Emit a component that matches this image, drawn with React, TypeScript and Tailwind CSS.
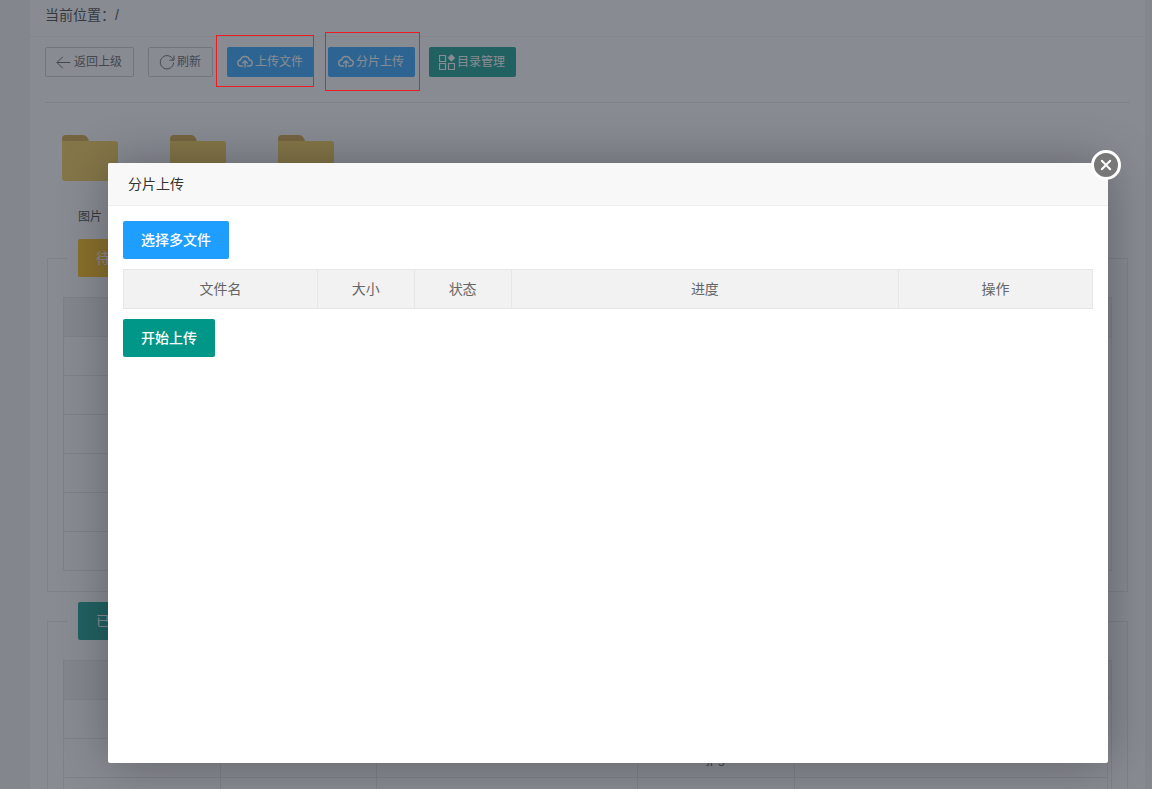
import React from 'react';

type IconProps = {
    children: React.ReactNode;
};

type FileRow = {
    cells: string[];
};

type FileSectionProps = {
    title: string;
    titleClass: string;
    rows: FileRow[];
};

const Icon: React.FC<IconProps> = ({children}) => (
    <svg
        className="size-4 shrink-0"
        viewBox="0 0 16 16"
        fill="none"
        stroke="currentColor"
        strokeWidth="1"
        strokeLinecap="round"
        strokeLinejoin="round"
        aria-hidden="true"
    >
        {children}
    </svg>
);

const BackIcon = () => (
    <Icon>
        <path d="M14 8.5H1M6.500 3L1 8.500l5.500 5.500"/>
    </Icon>
);

const RefreshIcon = () => (
    <Icon>
        <path d="M14.2 5.6A6.7 6.7 0 1 0 14.7 9"/>
        <path d="M15 2v4.200h-4.200"/>
    </Icon>
);

const UploadIcon = () => (
    <Icon>
        <path d="M5.600 12H4a3 3 0 0 1-.4-6A4.500 4.500 0 0 1 12.400 6 3 3 0 0 1 12 12h-1.600" strokeWidth="1.4"/>
        <path d="M8 13V7M5.700 9L8 6.800 10.300 9" strokeWidth="1.4"/>
    </Icon>
);

const GridIcon = () => (
    <Icon>
        <path d="M.5 1.500h6v6h-6zM.5 9.500h6v6h-6zM9.500 9.500h6v6h-6z" strokeWidth="1.2"/>
        <path d="M12.500 .8L15.700 4 12.500 7.200 9.300 4z" fill="currentColor"/>
    </Icon>
);

const FolderIcon = () => (
    <svg className="h-[46px] w-14" viewBox="0 0 56 46" aria-hidden="true">
        <path d="M0 10V4a4 4 0 0 1 4-4h17c3 0 5 3 6 6v4z" fill="#d09e32"/>
        <path d="M0 6h53a3 3 0 0 1 3 3v34a3 3 0 0 1-3 3H3a3 3 0 0 1-3-3z" fill="#f5cb46"/>
    </svg>
);

const smallButton = 'flex h-[30px] items-center gap-0.5 rounded-xs pr-[11px] pl-[10px] text-xs whitespace-nowrap';
const bigButton = 'h-[38px] rounded-xs px-[18px] text-sm whitespace-nowrap text-white';

const folders = ['图片', '', ''];

const emptyRow: FileRow = {cells: ['', '', '', '', '']};
const waitingRows: FileRow[] = Array(6).fill(emptyRow);
const uploadedRows: FileRow[] = [
    emptyRow,
    {cells: ['', '', '', 'jpg', '']},
    emptyRow,
    emptyRow,
];

const FileSection: React.FC<FileSectionProps> = ({title, titleClass, rows}) => (
    <fieldset className="mx-0.5 border border-[#e6e6e6] px-[15px] pb-5">
        <legend className="ml-[5px] px-[10px]">
            <button type="button" className={`${bigButton} ${titleClass}`}>{title}</button>
        </legend>
        <div className="mt-5 border border-[#e6e6e6]">
            <div className="h-[39px] border-b border-[#e6e6e6] bg-[#f2f2f2]"/>
            <div className="pr-[3px]">
                <table className="w-full table-fixed border-separate border-spacing-0 text-center text-sm text-[#666]">
                    <colgroup>
                        <col className="w-[15%]"/>
                        <col className="w-[15%]"/>
                        <col className="w-[25%]"/>
                        <col className="w-[15%]"/>
                        <col className="w-[30%]"/>
                    </colgroup>
                    <tbody>
                        {rows.map((row, index) => (
                            <tr key={index} className="group">
                                {row.cells.map((cell, i) => (
                                    <td
                                        key={i}
                                        className="h-[39px] border-r border-b border-[#e6e6e6] p-0 group-last:h-[38px] group-last:border-b-0"
                                    >
                                        {cell}
                                    </td>
                                ))}
                            </tr>
                        ))}
                    </tbody>
                </table>
            </div>
        </div>
    </fieldset>
);

const FilesPage = () => (
    <div className="ml-[30px] mr-[7px] min-h-full bg-white">
        <div className="flex h-[37px] items-start border-b border-[#f6f6f6] px-[15px] pt-[5px] text-sm text-[#333]">
            当前位置：/
        </div>
        <div className="px-[15px] pt-[10px]">
            <div className="flex gap-[14px] border-b border-[#e6e6e6] pb-[25px]">
                <button type="button" className={`${smallButton} border border-[#c9c9c9] text-[#555]`}>
                    <BackIcon/>返回上级
                </button>
                <button type="button" className={`${smallButton} border border-[#c9c9c9] text-[#555]`}>
                    <RefreshIcon/>刷新
                </button>
                <button type="button" className={`${smallButton} bg-[#1e9fff] text-white`}>
                    <UploadIcon/>上传文件
                </button>
                <button type="button" className={`${smallButton} bg-[#1e9fff] text-white`}>
                    <UploadIcon/>分片上传
                </button>
                <button type="button" className={`${smallButton} bg-[#009688] text-white`}>
                    <GridIcon/>目录管理
                </button>
            </div>
            <ul className="mt-8 flex h-[104px] gap-[18px]">
                {folders.map((name, index) => (
                    <li key={index} className="flex w-[90px] flex-col items-center gap-[26px] text-xs leading-5 text-[#333]">
                        <FolderIcon/>
                        {name}
                    </li>
                ))}
            </ul>
            <div className="flex flex-col gap-[10px]">
                <FileSection title="待上传" titleClass="bg-[#ffb800]" rows={waitingRows}/>
                <FileSection title="已上传" titleClass="bg-[#009688]" rows={uploadedRows}/>
            </div>
        </div>
    </div>
);

const UploadDialog = () => (
    <div
        role="dialog"
        aria-label="分片上传"
        className="relative min-h-[600px] flex-1 rounded-xs bg-white shadow-[1px_1px_50px_rgba(0,0,0,0.3)]"
    >
        <h2 className="flex h-[43px] items-center rounded-t-xs border-b border-[#eee] bg-[#f8f8f8] px-5 text-sm text-[#333]">
            分片上传
        </h2>
        <button
            type="button"
            aria-label="关闭"
            className="absolute -top-[13px] -right-[13px] flex size-[30px] items-center justify-center rounded-full border-3 border-white bg-[#787878] text-white"
        >
            <svg className="size-3" viewBox="0 0 12 12" stroke="currentColor" strokeWidth="2" strokeLinecap="round" aria-hidden="true">
                <path d="M1.800 1.800l8.400 8.400M10.200 1.800l-8.400 8.400"/>
            </svg>
        </button>
        <div className="flex flex-col items-start gap-[10px] p-[15px]">
            <button type="button" className={`${bigButton} bg-[#1e9fff] font-medium`}>选择多文件</button>
            <table className="w-full table-fixed border-collapse text-sm text-[#666]">
                <thead>
                    <tr className="h-[39px] bg-[#f2f2f2]">
                        <th className="w-[20%] border border-[#e6e6e6] font-normal">文件名</th>
                        <th className="w-[10%] border border-[#e6e6e6] font-normal">大小</th>
                        <th className="w-[10%] border border-[#e6e6e6] font-normal">状态</th>
                        <th className="w-[40%] border border-[#e6e6e6] font-normal">进度</th>
                        <th className="w-[20%] border border-[#e6e6e6] font-normal">操作</th>
                    </tr>
                </thead>
            </table>
            <button type="button" className={`${bigButton} bg-[#009688] font-medium`}>开始上传</button>
        </div>
    </div>
);

const App: React.FC = () => {
    return (
        <div className="relative h-screen overflow-hidden bg-[#f2f2f2] font-['Liberation_Sans','Noto_Sans_CJK_SC',sans-serif]">
            <FilesPage/>
            <div className="absolute inset-0 flex items-start bg-[#393d49]/60 pt-[163px] pr-11 pl-[108px]">
                <UploadDialog/>
            </div>
            {/* Red frames around the two upload buttons */}
            <div className="pointer-events-none absolute top-[35px] left-[216px] h-[52px] w-[98px] border border-[#ed1c24]"/>
            <div className="pointer-events-none absolute top-8 left-[325px] h-[59px] w-[95px] border border-[#ed1c24]"/>
        </div>
    );
};

export default App;
